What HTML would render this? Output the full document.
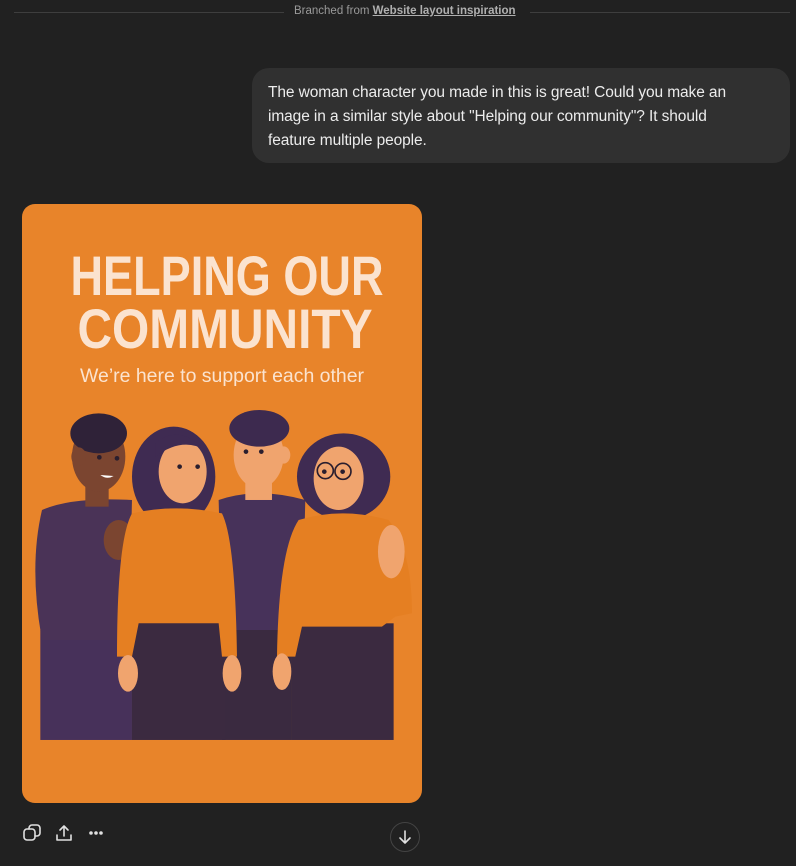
<!DOCTYPE html>
<html><head><meta charset="utf-8"><style>
html,body{margin:0;padding:0;background:#212121;width:796px;height:866px;overflow:hidden;font-family:"Liberation Sans",sans-serif}
.branch{position:absolute;top:5px;left:0;width:796px;height:16px}
.branch .l{position:absolute;top:7px;height:1px;background:#3e3e3e}
.branch .t{position:absolute;left:294px;top:0;font-size:11.5px;color:#9a9a9a;white-space:nowrap}
.branch .t b{font-weight:bold;color:#b0b0b0;text-decoration:underline}
.bubble{position:absolute;left:252px;top:68px;width:538px;height:95px;background:#303030;border-radius:17px;box-sizing:border-box;padding:13px 16px;color:#ececec;font-size:15.5px;line-height:24px}
.bubble div{width:485px;letter-spacing:-0.1px}
.img{position:absolute;left:22px;top:204px;width:400px;height:599px;border-radius:13px;background:#E8842A;overflow:hidden}
.icons{position:absolute;top:823px}
.dl{position:absolute;left:390px;top:822px;width:30px;height:30px;border:1px solid #444;border-radius:50%;box-sizing:border-box}
</style></head><body>
<div class="branch"><div class="l" style="left:14px;width:270px"></div><div class="t">Branched from <b>Website layout inspiration</b></div><div class="l" style="left:530px;width:260px"></div></div>
<div class="bubble"><div>The woman character you made in this is great! Could you make an image in a similar style about "Helping our community"? It should feature multiple people.</div></div>
<div class="img">
<svg width="400" height="599" viewBox="0 0 400 599">
<text x="205" y="91" text-anchor="middle" font-family="Liberation Sans Narrow, Liberation Sans, sans-serif" font-weight="bold" font-size="56" fill="#FBE3CF" textLength="313" lengthAdjust="spacingAndGlyphs">HELPING OUR</text>
<text x="203" y="144" text-anchor="middle" font-family="Liberation Sans Narrow, Liberation Sans, sans-serif" font-weight="bold" font-size="56" fill="#FBE3CF" textLength="295" lengthAdjust="spacingAndGlyphs">COMMUNITY</text>
<text x="200" y="178" text-anchor="middle" font-family="Liberation Sans, sans-serif" font-size="19" fill="#FBE3CF" textLength="284" lengthAdjust="spacingAndGlyphs">We’re here to support each other</text>
<g transform="translate(0,196) scale(0.3333)" stroke="none">
<rect x="55" y="690" width="275" height="330" fill="#47315a"/>
<path d="M60 330 Q150 290 330 300 L320 720 L60 720 Q20 500 60 330Z" fill="#4a3357"/>
<rect x="190" y="230" width="70" height="90" fill="#7b4530"/>
<ellipse cx="230" cy="170" rx="80" ry="105" fill="#7b4530"/>
<ellipse cx="230" cy="100" rx="85" ry="60" fill="#2f2238"/>
<ellipse cx="170" cy="170" rx="22" ry="28" fill="#7b4530"/>
<circle cx="232" cy="172" r="7" fill="#2a1e2e"/><circle cx="285" cy="175" r="7" fill="#2a1e2e"/>
<path d="M235 225 Q255 240 275 228Z" fill="#fff"/>
<ellipse cx="290" cy="420" rx="45" ry="60" fill="#7b4530"/>
<rect x="600" y="670" width="210" height="350" fill="#3a2a40"/>
<path d="M590 300 Q710 260 850 300 L840 690 L600 690Z" fill="#47325a"/>
<rect x="670" y="220" width="80" height="80" fill="#f0a46e"/>
<ellipse cx="710" cy="165" rx="75" ry="100" fill="#f0a46e"/>
<ellipse cx="712" cy="85" rx="90" ry="55" fill="#3d2a4f"/>
<ellipse cx="785" cy="165" rx="20" ry="26" fill="#f0a46e"/>
<circle cx="672" cy="155" r="7" fill="#2a1e2e"/><circle cx="718" cy="155" r="7" fill="#2a1e2e"/>
<ellipse cx="455" cy="230" rx="125" ry="150" fill="#3f2b52"/>
<rect x="330" y="650" width="280" height="370" fill="#3b2a40"/>
<path d="M330 340 Q460 310 600 340 Q640 420 645 770 L600 770 L590 670 L350 670 L330 770 L285 770 Q285 420 330 340Z" fill="#e57f22"/>
<ellipse cx="482" cy="215" rx="72" ry="95" fill="#f0a46e"/>
<path d="M400 130 Q470 70 550 150 Q480 110 400 170Z" fill="#3f2b52"/>
<circle cx="473" cy="200" r="7" fill="#2a1e2e"/><circle cx="527" cy="200" r="7" fill="#2a1e2e"/>
<ellipse cx="318" cy="820" rx="30" ry="55" fill="#f0a46e"/><ellipse cx="630" cy="820" rx="28" ry="55" fill="#f0a46e"/>
<ellipse cx="965" cy="230" rx="140" ry="130" fill="#3f2b52"/>
<rect x="810" y="670" width="305" height="350" fill="#3b2a40"/>
<path d="M830 360 Q960 320 1100 360 Q1170 450 1170 640 L1120 650 L1080 680 L840 680 L820 770 L765 770 Q770 450 830 360Z" fill="#e57f22"/>
<ellipse cx="950" cy="235" rx="75" ry="95" fill="#f0a46e"/>
<circle cx="907" cy="215" r="7" fill="#2a1e2e"/><circle cx="962" cy="215" r="7" fill="#2a1e2e"/>
<circle cx="910" cy="212" r="24" fill="none" stroke="#2a1e2e" stroke-width="5"/><circle cx="963" cy="214" r="24" fill="none" stroke="#2a1e2e" stroke-width="5"/>
<ellipse cx="1108" cy="455" rx="40" ry="80" fill="#f0a46e"/>
<ellipse cx="780" cy="815" rx="28" ry="55" fill="#f0a46e"/>
</g>
</svg>
</div>
<svg class="icons" style="left:22px" width="90" height="22" viewBox="0 0 90 22" fill="none" stroke="#e0e0e0" stroke-width="1.6" stroke-linecap="round" stroke-linejoin="round">
<rect x="2" y="6" width="11" height="11" rx="3"/><path d="M7 6V5a3 3 0 0 1 3-3h5a3 3 0 0 1 3 3v5a3 3 0 0 1-3 3h-2"/>
<path d="M42 3v10M38 7l4-4 4 4M35 12v5h14v-5"/>
<circle cx="69" cy="10" r="1" fill="#e0e0e0"/><circle cx="74" cy="10" r="1" fill="#e0e0e0"/><circle cx="79" cy="10" r="1" fill="#e0e0e0"/>
</svg>
<div class="dl"><svg width="28" height="28" viewBox="0 0 28 28" fill="none" stroke="#e0e0e0" stroke-width="1.6" stroke-linecap="round" stroke-linejoin="round"><path d="M14 8v12M9 15l5 5 5-5"/></svg></div>
</body></html>
